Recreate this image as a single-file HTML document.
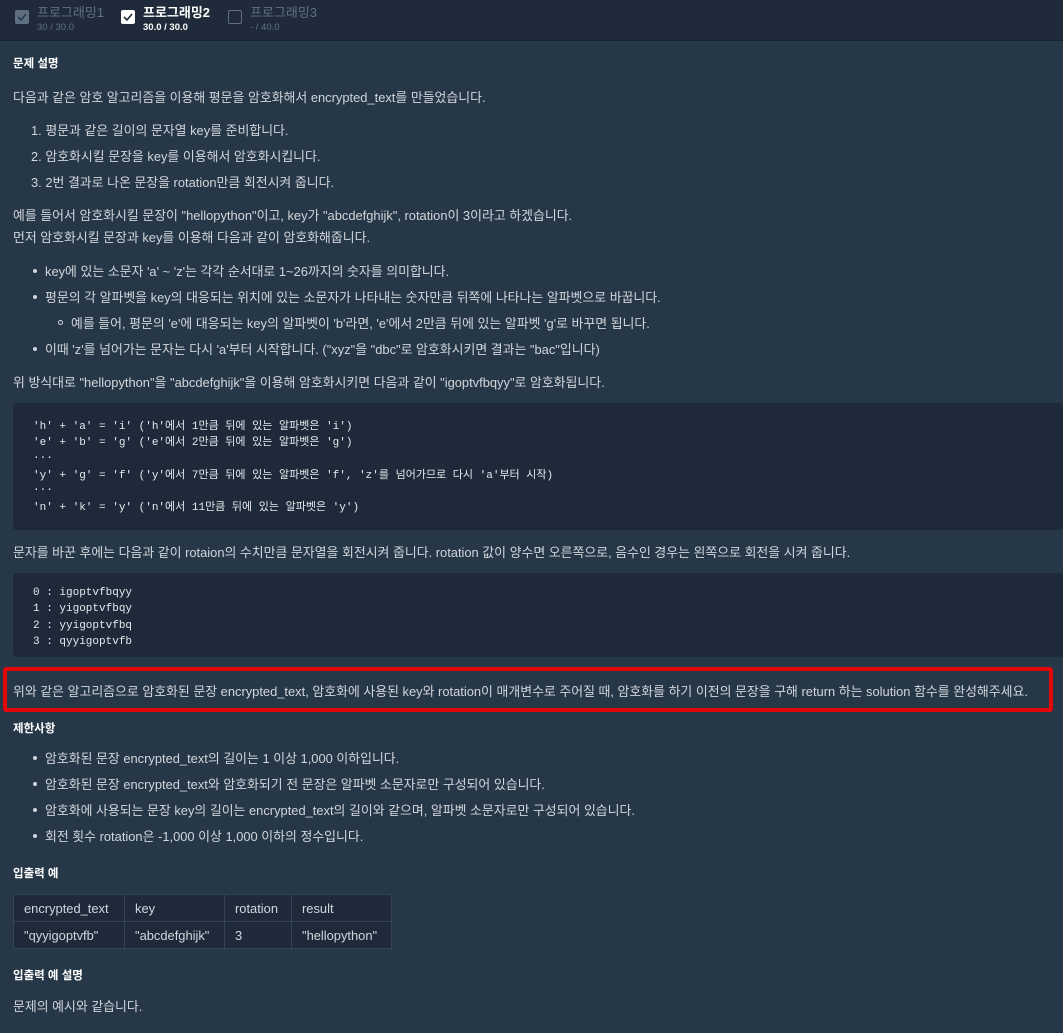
<!DOCTYPE html>
<html><head><meta charset="utf-8"><style>
*{margin:0;padding:0;box-sizing:border-box}
body{width:1063px;height:1033px;overflow:hidden;background:#263747;color:#d1d6dc;font-family:"Liberation Sans","Noto Sans CJK KR",sans-serif;font-size:12.9px;position:relative}
.hdr{position:absolute;left:0;top:0;width:1063px;height:41px;background:#1f2b3a;border-bottom:1px solid #172230}
.tab{position:absolute;top:5px}
.cb{position:absolute;top:5px;width:14px;height:14px;border-radius:2px}
.tt{position:absolute;left:22px;top:0;font-size:13px;line-height:16px;white-space:nowrap}
.ts{position:absolute;left:22px;top:17px;font-size:9.5px;line-height:11px;white-space:nowrap}
.a{position:absolute;white-space:nowrap;left:13px}
b{font-weight:bold;color:#fff;font-size:11.5px}
.code{position:absolute;left:13px;right:0;background:#1e2a3a;border-radius:3px;font-family:"Liberation Mono","Noto Sans CJK KR",monospace;font-size:11px;color:#e6e9ed;padding-left:20px}
.code div{height:16.3px;white-space:pre}
.dot{position:absolute;width:4px;height:4px;border-radius:50%;background:#d1d6dc}
table{position:absolute;left:13px;top:894px;border-collapse:collapse;background:#1e2a3a}
td{border:1px solid #33445a;height:27px;padding:0 10px;font-size:12.9px;white-space:nowrap}
</style></head><body>
<div class="hdr">
 <div class="tab" style="left:15px"><div class="cb" style="background:#5d6f80"><svg width="14" height="14" viewBox="0 0 14 14"><path d="M3 7l3 3 5-6" stroke="#26394a" stroke-width="1.6" fill="none"/></svg></div><div class="tt" style="color:#5f7182">프로그래밍1</div><div class="ts" style="color:#5f7182">30 / 30.0</div></div>
 <div class="tab" style="left:121px"><div class="cb" style="background:#fff"><svg width="14" height="14" viewBox="0 0 14 14"><path d="M3 7l3 3 5-6" stroke="#1f2b3a" stroke-width="1.6" fill="none"/></svg></div><div class="tt" style="color:#fff;font-weight:bold">프로그래밍2</div><div class="ts" style="color:#fff;font-weight:bold">30.0 / 30.0</div></div>
 <div class="tab" style="left:228px"><div class="cb" style="border:1.5px solid #5d6f80"></div><div class="tt" style="color:#5f7182">프로그래밍3</div><div class="ts" style="color:#5f7182">- / 40.0</div></div>
</div>
<div class="a" style="top:55px"><b>문제 설명</b></div>
<div class="a" style="top:87px">다음과 같은 암호 알고리즘을 이용해 평문을 암호화해서 encrypted_text를 만들었습니다.</div>
<div class="a" style="top:120px;left:31px">1. 평문과 같은 길이의 문자열 key를 준비합니다.</div>
<div class="a" style="top:146px;left:31px">2. 암호화시킬 문장을 key를 이용해서 암호화시킵니다.</div>
<div class="a" style="top:172px;left:31px">3. 2번 결과로 나온 문장을 rotation만큼 회전시켜 줍니다.</div>
<div class="a" style="top:205px">예를 들어서 암호화시킬 문장이 "hellopython"이고, key가 "abcdefghijk", rotation이 3이라고 하겠습니다.</div>
<div class="a" style="top:227px">먼저 암호화시킬 문장과 key를 이용해 다음과 같이 암호화해줍니다.</div>
<div class="dot" style="left:33px;top:269px"></div><div class="a" style="top:261px;left:45px">key에 있는 소문자 'a' ~ 'z'는 각각 순서대로 1~26까지의 숫자를 의미합니다.</div>
<div class="dot" style="left:33px;top:295px"></div><div class="a" style="top:287px;left:45px">평문의 각 알파벳을 key의 대응되는 위치에 있는 소문자가 나타내는 숫자만큼 뒤쪽에 나타나는 알파벳으로 바꿉니다.</div>
<div class="dot" style="left:58px;top:320px;background:none;border:1px solid #d1d6dc;width:5px;height:5px"></div><div class="a" style="top:313px;left:71px">예를 들어, 평문의 'e'에 대응되는 key의 알파벳이 'b'라면, 'e'에서 2만큼 뒤에 있는 알파벳 'g'로 바꾸면 됩니다.</div>
<div class="dot" style="left:33px;top:347px"></div><div class="a" style="top:339px;left:45px">이때 'z'를 넘어가는 문자는 다시 'a'부터 시작합니다. ("xyz"을 "dbc"로 암호화시키면 결과는 "bac"입니다)</div>
<div class="a" style="top:372px">위 방식대로 "hellopython"을 "abcdefghijk"을 이용해 암호화시키면 다음과 같이 "igoptvfbqyy"로 암호화됩니다.</div>
<div class="code" style="top:403px;height:127px;padding-top:14px">
<div>'h' + 'a' = 'i' ('h'에서 1만큼 뒤에 있는 알파벳은 'i')</div><div>'e' + 'b' = 'g' ('e'에서 2만큼 뒤에 있는 알파벳은 'g')</div><div>...</div><div>'y' + 'g' = 'f' ('y'에서 7만큼 뒤에 있는 알파벳은 'f', 'z'를 넘어가므로 다시 'a'부터 시작)</div><div>...</div><div>'n' + 'k' = 'y' ('n'에서 11만큼 뒤에 있는 알파벳은 'y')</div></div>
<div class="a" style="top:542px">문자를 바꾼 후에는 다음과 같이 rotaion의 수치만큼 문자열을 회전시켜 줍니다. rotation 값이 양수면 오른쪽으로, 음수인 경우는 왼쪽으로 회전을 시켜 줍니다.</div>
<div class="code" style="top:573px;height:84px;padding-top:14px">
<div>0 : igoptvfbqyy</div><div>1 : yigoptvfbqy</div><div>2 : yyigoptvfbq</div><div>3 : qyyigoptvfb</div></div>
<div style="position:absolute;left:3px;top:667px;width:1050px;height:45px;border:4px solid #e0080a;border-radius:3px"></div>
<div class="a" style="top:681px">위와 같은 알고리즘으로 암호화된 문장 encrypted_text, 암호화에 사용된 key와 rotation이 매개변수로 주어질 때, 암호화를 하기 이전의 문장을 구해 return 하는 solution 함수를 완성해주세요.</div>
<div class="a" style="top:720px"><b>제한사항</b></div>
<div class="dot" style="left:33px;top:756px"></div><div class="a" style="top:748px;left:45px">암호화된 문장 encrypted_text의 길이는 1 이상 1,000 이하입니다.</div>
<div class="dot" style="left:33px;top:782px"></div><div class="a" style="top:774px;left:45px">암호화된 문장 encrypted_text와 암호화되기 전 문장은 알파벳 소문자로만 구성되어 있습니다.</div>
<div class="dot" style="left:33px;top:808px"></div><div class="a" style="top:800px;left:45px">암호화에 사용되는 문장 key의 길이는 encrypted_text의 길이와 같으며, 알파벳 소문자로만 구성되어 있습니다.</div>
<div class="dot" style="left:33px;top:834px"></div><div class="a" style="top:826px;left:45px">회전 횟수 rotation은 -1,000 이상 1,000 이하의 정수입니다.</div>
<div class="a" style="top:865px"><b>입출력 예</b></div>
<table><tr><td style="width:111px">encrypted_text</td><td style="width:100px">key</td><td style="width:67px">rotation</td><td style="width:100px">result</td></tr>
<tr><td>"qyyigoptvfb"</td><td>"abcdefghijk"</td><td>3</td><td>"hellopython"</td></tr></table>
<div class="a" style="top:967px"><b>입출력 예 설명</b></div>
<div class="a" style="top:996px">문제의 예시와 같습니다.</div>
</body></html>
